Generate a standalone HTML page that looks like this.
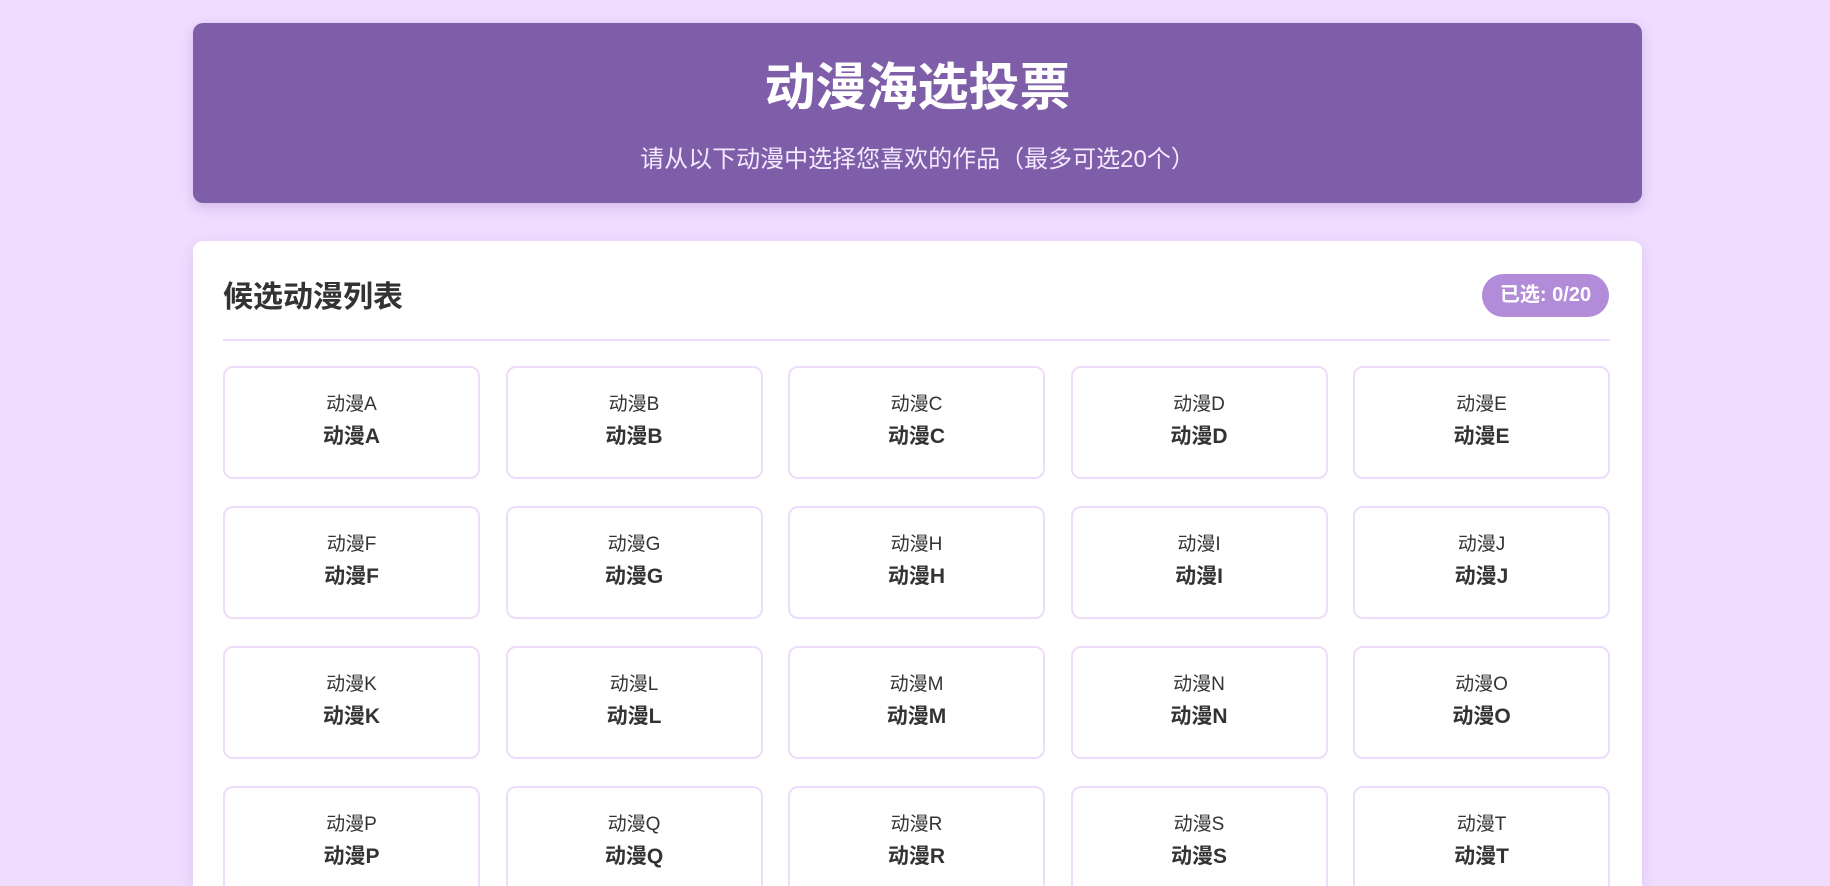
<!DOCTYPE html>
<html><head><meta charset="utf-8"><style>
*{margin:0;padding:0;box-sizing:border-box}
html{width:1830px;height:886px;overflow:hidden}
body{width:1830px;height:886px;overflow:hidden;position:relative;background:#efdcff;font-family:"Liberation Sans","Noto Sans CJK SC",sans-serif;color:#333}
.hdr{position:absolute;left:193px;top:23px;width:1449px;height:180px;background:#7e5ea8;border-radius:10px;box-shadow:0 4px 12px rgba(100,60,150,.2);color:#fff;text-align:center}
.hdr h1{position:absolute;left:0;right:0;top:35px;font-size:51px;line-height:60px;font-weight:bold}
.hdr p{position:absolute;left:0;right:0;top:123px;font-size:24px;line-height:28px;color:#f3eaff}
.main{position:absolute;left:193px;top:241px;width:1449px;height:645px;background:#fff;border-radius:10px 10px 0 0;box-shadow:0 4px 14px rgba(100,60,150,.12)}
.ttl{position:absolute;left:30px;top:39px;font-size:30px;line-height:36px;font-weight:bold;color:#333}
.badge{position:absolute;left:1289px;top:33px;width:127px;height:43px;border-radius:22px;background:#b38cd9;color:#fff;font-weight:bold;font-size:20px;line-height:43px;text-align:center}
.line{position:absolute;left:30px;top:98px;width:1387px;height:2px;background:#eedcfb}
.grid{position:absolute;left:30px;top:125px;width:1387px;display:grid;grid-template-columns:repeat(5,257px);column-gap:25.5px;row-gap:27px}
.c{height:113px;border:2px solid #eedcfb;border-radius:10px;text-align:center;padding-top:23px}
.c .a{font-size:19px;line-height:28px;color:#333}
.c .b{font-size:21px;line-height:30px;font-weight:bold;color:#333;margin-top:3px}
</style></head><body>
<div class="hdr"><h1>动漫海选投票</h1><p>请从以下动漫中选择您喜欢的作品（最多可选20个）</p></div>
<div class="main">
<div class="ttl">候选动漫列表</div>
<div class="badge">已选: 0/20</div>
<div class="line"></div>
<div class="grid">
<div class="c"><div class="a">动漫A</div><div class="b">动漫A</div></div>
<div class="c"><div class="a">动漫B</div><div class="b">动漫B</div></div>
<div class="c"><div class="a">动漫C</div><div class="b">动漫C</div></div>
<div class="c"><div class="a">动漫D</div><div class="b">动漫D</div></div>
<div class="c"><div class="a">动漫E</div><div class="b">动漫E</div></div>
<div class="c"><div class="a">动漫F</div><div class="b">动漫F</div></div>
<div class="c"><div class="a">动漫G</div><div class="b">动漫G</div></div>
<div class="c"><div class="a">动漫H</div><div class="b">动漫H</div></div>
<div class="c"><div class="a">动漫I</div><div class="b">动漫I</div></div>
<div class="c"><div class="a">动漫J</div><div class="b">动漫J</div></div>
<div class="c"><div class="a">动漫K</div><div class="b">动漫K</div></div>
<div class="c"><div class="a">动漫L</div><div class="b">动漫L</div></div>
<div class="c"><div class="a">动漫M</div><div class="b">动漫M</div></div>
<div class="c"><div class="a">动漫N</div><div class="b">动漫N</div></div>
<div class="c"><div class="a">动漫O</div><div class="b">动漫O</div></div>
<div class="c"><div class="a">动漫P</div><div class="b">动漫P</div></div>
<div class="c"><div class="a">动漫Q</div><div class="b">动漫Q</div></div>
<div class="c"><div class="a">动漫R</div><div class="b">动漫R</div></div>
<div class="c"><div class="a">动漫S</div><div class="b">动漫S</div></div>
<div class="c"><div class="a">动漫T</div><div class="b">动漫T</div></div>
</div>
</div>
</body></html>
